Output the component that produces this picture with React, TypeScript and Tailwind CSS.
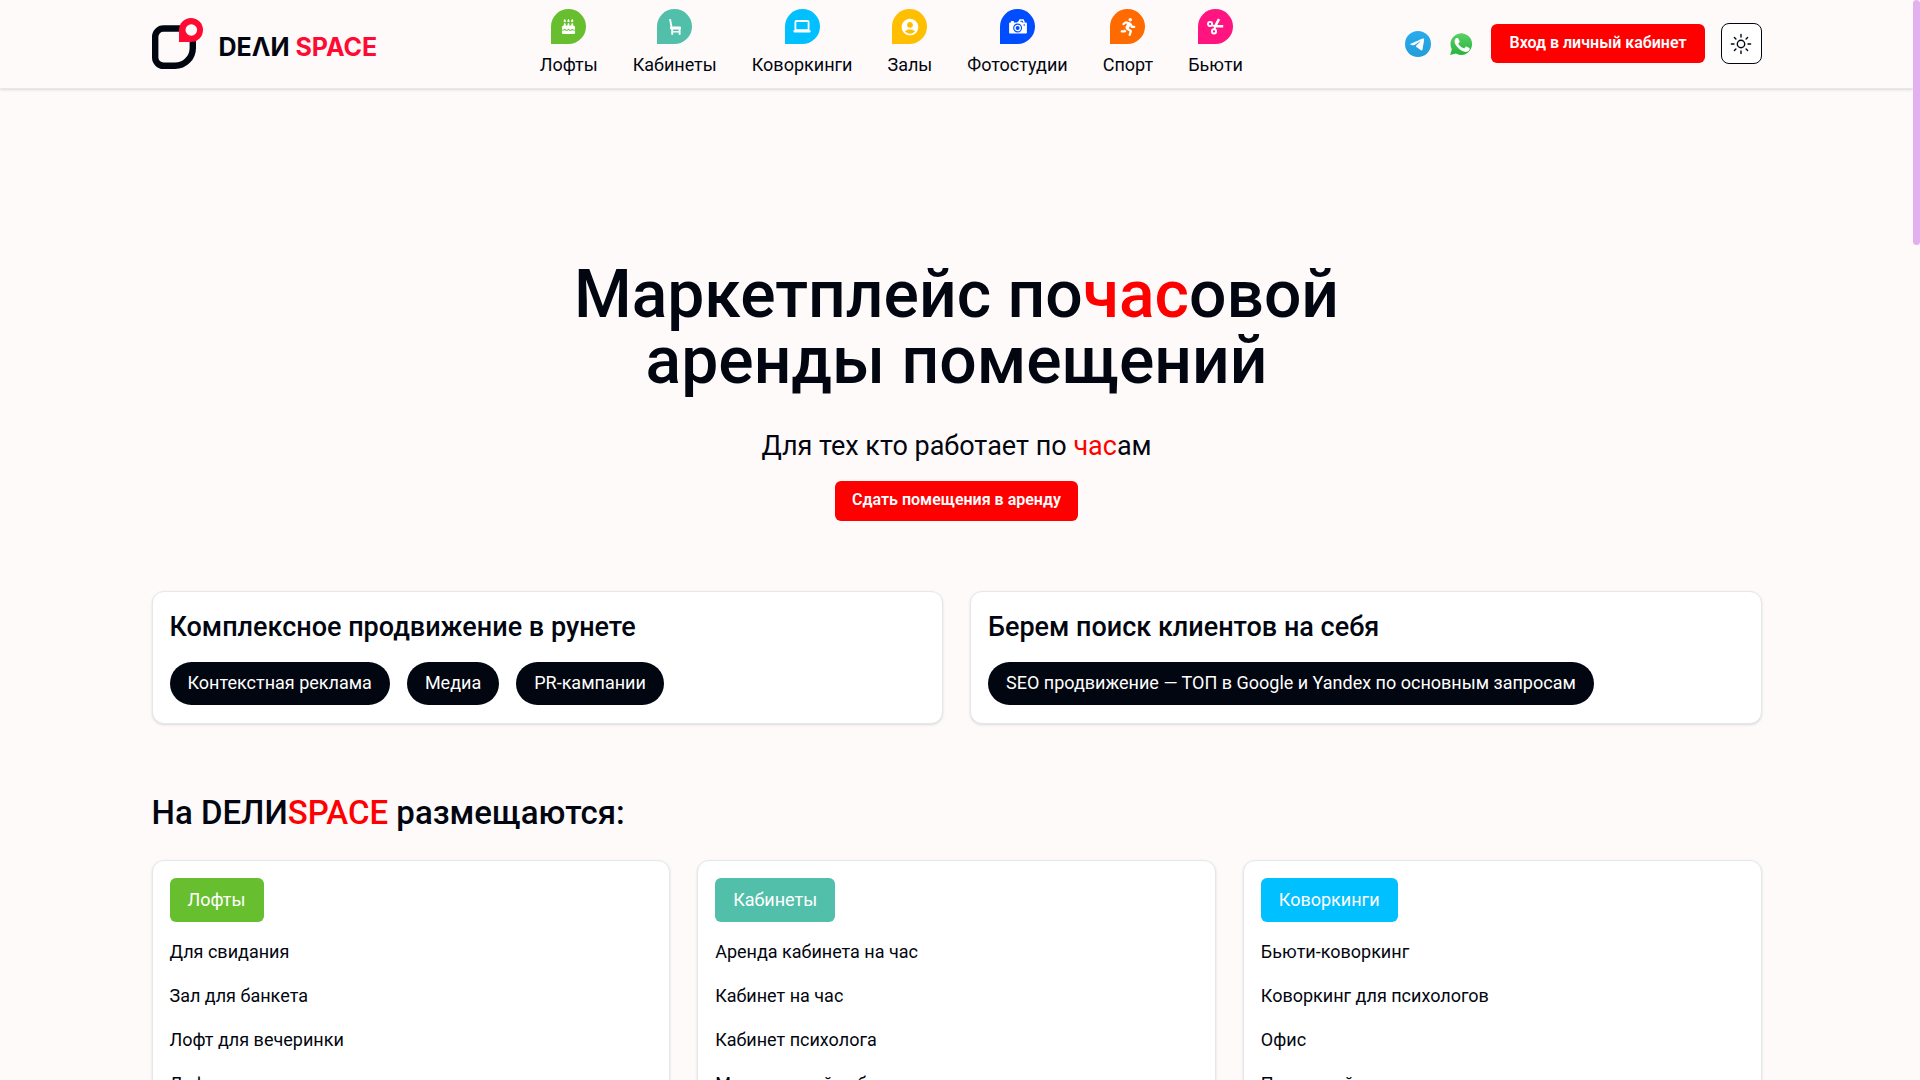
import type { ReactNode } from 'react';
import { FaRunning } from 'react-icons/fa';
import { FaCakeCandles } from 'react-icons/fa6';
import { MdAccountCircle } from 'react-icons/md';

function ChairIcon() {
  return (
    <svg width="12" height="16" viewBox="0 0 12 16" fill="none" stroke="white" aria-hidden="true">
      <path d="M1.2 .8 2.6 8.6" strokeWidth="1.9" strokeLinecap="round" />
      <path d="M2.2 9h8.6" strokeWidth="2.8" strokeLinecap="round" />
      <path d="M3.2 9v6.8M10.6 9v6.800" strokeWidth="1.9" />
      <path d="M3 12.8h7.6" strokeWidth="1.4" />
    </svg>
  );
}

function LaptopIcon() {
  return (
    <svg width="18" height="13" viewBox="0 0 18 13" aria-hidden="true">
      <rect x="2.4" y="1" width="13.2" height="9.2" rx="1" fill="none" stroke="white" strokeWidth="1.8" />
      <path d="M.4 10.2h6.2l.6.7h3.6l.6-.7h6.2v1.1c0 .7-.6 1.300-1.300 1.300H1.7c-.7 0-1.300-.6-1.300-1.300z" fill="white" />
    </svg>
  );
}

function CameraIcon() {
  return (
    <svg width="18" height="15" viewBox="0 0 18 15" aria-hidden="true">
      <path
        d="M1.2 3.4h.7v-.8c0-.3.2-.5.5-.5h2c.3 0 .5.2.5.5v.8h3L9.200 2.400h3l.9 1h3.700c.6 0 1.100.5 1.100 1.100v9c0 .6-.5 1.100-1.100 1.100H1.200c-.6 0-1.100-.5-1.100-1.100v-9c0-.6.5-1.100 1.100-1.100z"
        fill="white"
      />
      <path d="M9.800 3.600 10.900 1h3.200l1.200 2.600" fill="none" stroke="white" strokeWidth="1.5" />
      <circle cx="8.600" cy="9" r="3.900" fill="none" stroke="#004cff" strokeWidth="1.1" />
      <circle cx="8.600" cy="9" r="2" fill="#004cff" />
      <circle cx="15.200" cy="6" r=".8" fill="#004cff" />
    </svg>
  );
}

function ScissorsIcon() {
  return (
    <svg width="17" height="17" viewBox="0 0 17 17" fill="none" stroke="white" strokeWidth="1.9" aria-hidden="true">
      <circle cx="3.1" cy="6" r="2.1" />
      <circle cx="7" cy="13.4" r="2.1" />
      <path d="M4.9 7.2 8 8.4M7.6 11.3 8 8.4" />
      <path d="M7.6 8.3h8.6M7.8 8.8 12 1.2" strokeWidth="2.6" />
    </svg>
  );
}

function SunIcon() {
  return (
    <svg width="22" height="22" viewBox="0 0 22 22" fill="none" stroke="currentColor" strokeWidth="1.4" strokeLinecap="round" aria-hidden="true">
      <circle cx="11" cy="11" r="3.7" />
      <path d="M11 1.4v2.6M11 18v2.6M1.4 11H4M18 11h2.6M4.4 4.4l1.5 1.5M16.1 16.1l1.5 1.5M4.4 17.6l1.5-1.5M16.1 5.9l1.5-1.5" />
    </svg>
  );
}

function TelegramIcon() {
  return (
    <svg width="26" height="26" viewBox="0 0 26 26" aria-hidden="true">
      <defs>
        <linearGradient id="tg" x1="0" y1="0" x2="0" y2="1">
          <stop offset="0" stopColor="#2aabee" />
          <stop offset="1" stopColor="#229ed9" />
        </linearGradient>
      </defs>
      <circle cx="13" cy="13" r="13" fill="url(#tg)" />
      <path
        d="M5.3 12.9c4-1.8 6.7-2.9 8-3.5 3.8-1.6 4.6-1.8 5.1-1.8.5 0 .8.3.7 1-.2 2.2-1.1 7.4-1.6 9.8-.2 1-.9 1.2-1.5.8l-4.6-3.3c-.6-.4-.6-.9-.1-1.4l3.9-3.8c.3-.3 0-.5-.4-.2l-5.3 3.5c-.6.4-1.1.4-1.8.2l-2.3-.7c-.8-.2-.8-.4-.1-.6z"
        fill="white"
      />
    </svg>
  );
}

function WhatsAppIcon() {
  return (
    <svg width="24" height="24" viewBox="0 0 24 24" aria-hidden="true">
      <defs>
        <linearGradient id="wa" x1="0" y1="0" x2="0" y2="1">
          <stop offset="0" stopColor="#5bd066" />
          <stop offset="1" stopColor="#27b43e" />
        </linearGradient>
      </defs>
      <path d="M1.2 23l1.6-5.7A10.8 10.8 0 1 1 6.9 21.5z" fill="url(#wa)" />
      <path
        d="M9.3 6.5c-.3-.6-.5-.6-.8-.6h-.7c-.3 0-.7.1-1 .5-.4.4-1.3 1.3-1.3 3.1 0 1.8 1.4 3.6 1.5 3.8.2.3 2.6 4.1 6.4 5.6 3.2 1.2 3.8 1 4.5.9.7-.1 2.2-.9 2.5-1.8.3-.9.3-1.6.2-1.800-.1-.2-.3-.3-.7-.4l-2.500-1.200c-.3-.1-.6-.2-.8.2l-1.200 1.400c-.2.3-.4.3-.8.1-.4-.2-1.600-.6-3-1.800-1.100-1-1.900-2.200-2.100-2.600-.2-.4 0-.6.2-.8l.5-.6c.2-.2.3-.4.4-.6.1-.3.1-.5 0-.7z"
        fill="white"
      />
    </svg>
  );
}

function Logo() {
  return (
    <a href="#" className="flex items-center gap-4" aria-label="DEЛИSPACE">
      <svg width="51" height="51" viewBox="0 0 51 51" aria-hidden="true">
        <path
          d="M11.5 10.5h21.9c4 0 7.4 3.3 7.4 7.4v12c0 9.9-8 17.9-17.9 17.9H11.5c-4.600 0-8.300-3.700-8.300-8.300V18.800c0-4.600 3.700-8.300 8.300-8.300z"
          fill="none"
          stroke="#020610"
          strokeWidth="6.4"
        />
        <path d="M27 24V12a12 12 0 1 1 12 12z" fill="#ff0a32" />
        <circle cx="39.3" cy="12" r="5.8" fill="#fffafa" />
      </svg>
      <span className="flex gap-1.5 pt-1.5 font-['Inter',sans-serif] text-[25px] leading-6 font-bold">
        <span>DEΛИ</span>
        <span className="text-[#ff0a32]">SPACE</span>
      </span>
    </a>
  );
}

const categories: { label: string; color: string; icon: ReactNode }[] = [
  { label: 'Лофты', color: 'bg-[#67bf2f]', icon: <FaCakeCandles size={15} /> },
  { label: 'Кабинеты', color: 'bg-[#52bfab]', icon: <ChairIcon /> },
  { label: 'Коворкинги', color: 'bg-[#00c0ff]', icon: <LaptopIcon /> },
  { label: 'Залы', color: 'bg-[#ffbf00]', icon: <MdAccountCircle size={20} /> },
  { label: 'Фотостудии', color: 'bg-[#004cff]', icon: <CameraIcon /> },
  { label: 'Спорт', color: 'bg-[#ff6b00]', icon: <FaRunning size={18} /> },
  { label: 'Бьюти', color: 'bg-[#ff1480]', icon: <ScissorsIcon /> },
];

const promos = [
  { title: 'Комплексное продвижение в рунете', tags: ['Контекстная реклама', 'Медиа', 'PR-кампании'] },
  { title: 'Берем поиск клиентов на себя', tags: ['SEO продвижение — ТОП в Google и Yandex по основным запросам'] },
];

const groups = [
  {
    title: 'Лофты',
    color: 'bg-[#67bf2f]',
    items: ['Для свидания', 'Зал для банкета', 'Лофт для вечеринки', 'Лофт для выпускного'],
  },
  {
    title: 'Кабинеты',
    color: 'bg-[#52bfab]',
    items: ['Аренда кабинета на час', 'Кабинет на час', 'Кабинет психолога', 'Медицинский кабинет'],
  },
  {
    title: 'Коворкинги',
    color: 'bg-[#00c0ff]',
    items: ['Бьюти-коворкинг', 'Коворкинг для психологов', 'Офис', 'Почасовой коворкинг'],
  },
];

function Header() {
  return (
    <header className="border-b border-gray-200 shadow-sm">
      <div className="mx-auto flex max-w-[1610px] items-center justify-between pt-[9px] pb-[10px]">
        <Logo />
        <nav className="flex gap-[35px]">
          {categories.map((c) => (
            <a key={c.label} href="#" className="flex flex-col items-center gap-[7px]">
              <span className={`flex size-[35px] items-center justify-center rounded-full rounded-bl-none text-white ${c.color}`}>
                {c.icon}
              </span>
              <span className="leading-[27px]">{c.label}</span>
            </a>
          ))}
        </nav>
        <div className="flex items-center">
          <a href="#" aria-label="Telegram" className="mr-[18px]">
            <TelegramIcon />
          </a>
          <a href="#" aria-label="WhatsApp" className="mr-[18px]">
            <WhatsAppIcon />
          </a>
          <button type="button" className="mr-4 rounded-md bg-[#ff0000] px-[18px] pt-[6px] pb-2 text-base leading-[25px] font-semibold text-white">
            Вход в личный кабинет
          </button>
          <button
            type="button"
            aria-label="Сменить тему"
            className="flex size-[41px] items-center justify-center rounded-lg border border-[#020610] bg-white"
          >
            <SunIcon />
          </button>
        </div>
      </div>
    </header>
  );
}

export default function App() {
  return (
    <div className="relative h-screen overflow-hidden bg-[#fffafa] pr-[7px] font-['Roboto',sans-serif] text-lg leading-[27px] text-[#020610]">
      <Header />
      <main className="mx-auto max-w-[1610px]">
        <section className="flex flex-col items-center pt-[173px] text-center">
          <h1 className="text-[66px] leading-[66px] font-medium">
            Маркетплейс по<span className="text-[#ff0000]">час</span>овой
            <br />
            аренды помещений
          </h1>
          <p className="mt-8 text-[27px] leading-10">
            Для тех кто работает по <span className="text-[#ff0000]">час</span>ам
          </p>
          <button type="button" className="mt-[15px] rounded-md bg-[#ff0000] px-[17px] pt-[6px] pb-2 text-base leading-[26px] font-semibold text-white">
            Сдать помещения в аренду
          </button>
        </section>

        <section className="mt-[70px] grid grid-cols-2 gap-[27px]">
          {promos.map((p) => (
            <article key={p.title} className="rounded-xl border border-gray-200 bg-white p-[17px] pb-[18px] shadow-sm">
              <h3 className="text-[27px] leading-9 font-medium">{p.title}</h3>
              <ul className="mt-[17px] flex flex-wrap gap-[17px]">
                {p.tags.map((t) => (
                  <li key={t} className="rounded-full bg-[#020610] px-[18px] pt-[7px] pb-[9px] text-white">
                    {t}
                  </li>
                ))}
              </ul>
            </article>
          ))}
        </section>

        <section className="mt-[69px]">
          <h2 className="text-[33px] leading-10 font-medium">
            На DEЛИ<span className="text-[#ff0000]">SPACE</span> размещаются:
          </h2>
          <div className="mt-[27px] grid grid-cols-3 gap-[27px]">
            {groups.map((g) => (
              <article key={g.title} className="flex flex-col items-start rounded-xl border border-gray-200 bg-white p-[17px] shadow-sm">
                <a href="#" className={`rounded-md px-[18px] pt-2 pb-[9px] text-white ${g.color}`}>
                  {g.title}
                </a>
                <ul className="mt-4 flex flex-col gap-[17px]">
                  {g.items.map((i) => (
                    <li key={i}>
                      <a href="#">{i}</a>
                    </li>
                  ))}
                </ul>
              </article>
            ))}
          </div>
        </section>
      </main>
      <div className="absolute top-0 right-0 h-[245px] w-[7px] rounded-full bg-[#e2b0ee]" aria-hidden="true" />
    </div>
  );
}
